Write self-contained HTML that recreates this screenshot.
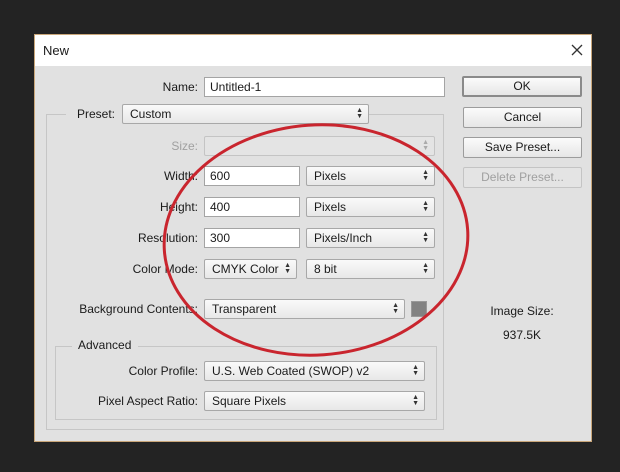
<!DOCTYPE html>
<html><head><style>
body{margin:0;width:620px;height:472px;background:#232323;position:relative;overflow:hidden;font-family:"Liberation Sans","DejaVu Sans",sans-serif;font-size:12px;color:#1a1a1a}
.a{position:absolute}
#dlg{left:34px;top:34px;width:558px;height:408px;background:#e1e1e1;border:1px solid #c9a679;box-sizing:border-box}
#tb{left:35px;top:35px;width:556px;height:31px;background:#fff}
.lbl{position:absolute;text-align:right;line-height:20px;white-space:nowrap}
.inp{position:absolute;background:#fff;border:1px solid #a4a4a4;box-sizing:border-box;line-height:18px;padding-left:5px}
.sel{position:absolute;background:linear-gradient(#fafafa,#e8e8e8);border:1px solid #a8a8a8;border-radius:2px;box-sizing:border-box;line-height:18px;padding-left:7px}
.arr{position:absolute;right:5px;top:3px;font-size:7px;line-height:6px;color:#333;text-align:center}
.dis{color:#a0a0a0}
.btn{position:absolute;background:linear-gradient(#fbfbfb,#e6e6e6);border:1px solid #9c9c9c;border-radius:2px;box-sizing:border-box;text-align:center;line-height:19px}
.grp{position:absolute;border:1px solid #c6c6c6;box-sizing:border-box}
</style></head><body>
<div id="dlg" class="a"></div>
<div id="tb" class="a"></div>
<div class="a" style="left:43px;top:43px;font-size:13px">New</div>
<svg class="a" style="left:571px;top:44px" width="12" height="12"><path d="M1 1L11 11M11 1L1 11" stroke="#333" stroke-width="1.3"/></svg>

<div class="grp" style="left:46px;top:114px;width:398px;height:316px"></div>
<div class="a" style="left:66px;top:104px;width:56px;height:20px;background:#e1e1e1"></div>
<div class="grp" style="left:55px;top:346px;width:382px;height:74px"></div>
<div class="a" style="left:72px;top:336px;width:66px;height:20px;background:#e1e1e1"></div>

<div class="lbl" style="right:422px;top:77px">Name:</div>
<div class="inp" style="left:204px;top:77px;width:241px;height:20px">Untitled-1</div>
<div class="lbl" style="left:77px;top:104px">Preset:</div>
<div class="sel" style="left:122px;top:104px;width:247px;height:20px">Custom<span class="arr">▲<br>▼</span></div>
<div class="lbl dis" style="right:422px;top:136px">Size:</div>
<div class="sel" style="left:204px;top:136px;width:231px;height:20px;background:#e4e4e4;border-color:#c4c4c4"><span class="arr" style="color:#aaa">▲<br>▼</span></div>

<div class="lbl" style="right:422px;top:166px">Width:</div>
<div class="inp" style="left:204px;top:166px;width:96px;height:20px">600</div>
<div class="sel" style="left:306px;top:166px;width:129px;height:20px">Pixels<span class="arr">▲<br>▼</span></div>
<div class="lbl" style="right:422px;top:197px">Height:</div>
<div class="inp" style="left:204px;top:197px;width:96px;height:20px">400</div>
<div class="sel" style="left:306px;top:197px;width:129px;height:20px">Pixels<span class="arr">▲<br>▼</span></div>
<div class="lbl" style="right:422px;top:228px">Resolution:</div>
<div class="inp" style="left:204px;top:228px;width:96px;height:20px">300</div>
<div class="sel" style="left:306px;top:228px;width:129px;height:20px">Pixels/Inch<span class="arr">▲<br>▼</span></div>
<div class="lbl" style="right:422px;top:259px">Color Mode:</div>
<div class="sel" style="left:204px;top:259px;width:93px;height:20px">CMYK Color<span class="arr">▲<br>▼</span></div>
<div class="sel" style="left:306px;top:259px;width:129px;height:20px">8 bit<span class="arr">▲<br>▼</span></div>

<div class="lbl" style="right:422px;top:299px">Background Contents:</div>
<div class="sel" style="left:204px;top:299px;width:201px;height:20px">Transparent<span class="arr">▲<br>▼</span></div>
<div class="a" style="left:411px;top:301px;width:16px;height:16px;background:#828282;border:1px solid #999;box-sizing:border-box"></div>

<div class="lbl" style="left:78px;top:335px">Advanced</div>
<div class="lbl" style="right:422px;top:361px">Color Profile:</div>
<div class="sel" style="left:204px;top:361px;width:221px;height:20px">U.S. Web Coated (SWOP) v2<span class="arr">▲<br>▼</span></div>
<div class="lbl" style="right:422px;top:391px">Pixel Aspect Ratio:</div>
<div class="sel" style="left:204px;top:391px;width:221px;height:20px">Square Pixels<span class="arr">▲<br>▼</span></div>

<div class="btn" style="left:462px;top:76px;width:120px;height:21px;border:2px solid #8a8a8a;line-height:17px">OK</div>
<div class="btn" style="left:463px;top:107px;width:119px;height:21px">Cancel</div>
<div class="btn" style="left:463px;top:137px;width:119px;height:21px">Save Preset...</div>
<div class="btn dis" style="left:463px;top:167px;width:119px;height:21px;border-color:#c4c4c4;background:#e4e4e4">Delete Preset...</div>

<div class="a" style="left:462px;top:304px;width:120px;text-align:center">Image Size:</div>
<div class="a" style="left:462px;top:328px;width:120px;text-align:center">937.5K</div>

<svg class="a" style="left:0;top:0" width="620" height="472"><ellipse cx="316" cy="240" rx="152" ry="115" transform="rotate(-4 316 240)" fill="none" stroke="#c9252e" stroke-width="3"/></svg>
</body></html>
